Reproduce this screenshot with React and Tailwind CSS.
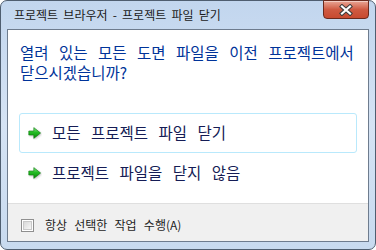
import React from "react";

const KR = { fontFamily: '"Noto Sans CJK KR", "Noto Sans", sans-serif' };

function Arrow() {
  return (
    <svg width="14" height="13" viewBox="0 0 14 13" className="shrink-0">
      <defs>
        <linearGradient id="ag" x1="0" y1="0" x2="0" y2="1">
          <stop offset="0" stopColor="#86e886" />
          <stop offset="0.45" stopColor="#22bb22" />
          <stop offset="1" stopColor="#0a8a0a" />
        </linearGradient>
        <filter id="sh" x="-30%" y="-30%" width="160%" height="160%">
          <feGaussianBlur stdDeviation="0.9" />
        </filter>
      </defs>
      <path d="M1.5 5 H6.5 V1.5 L13.5 7 L6.5 12.5 V9 H1.5 Z" fill="#000" opacity="0.3" filter="url(#sh)" />
      <path d="M0.8 4 H5.8 V0.6 L12.6 6 L5.8 11.4 V8 H0.8 Z" fill="url(#ag)" stroke="#0c7a0c" strokeWidth="0.6" strokeLinejoin="round" />
    </svg>
  );
}

function CloseButton() {
  return (
    <div className="absolute top-[-1px] right-[6px] w-[46px] h-[19px] rounded-b-[4px] border border-[#6a2a1e] bg-gradient-to-b from-[#e8a696] via-[#cf5a42] to-[#c84a30] flex items-center justify-center shadow-[inset_0_1px_0_rgba(255,255,255,0.45)]">
      <svg width="16" height="12" viewBox="0 0 16 12">
        <path d="M4 2.5 L12 9.5 M12 2.5 L4 9.5" stroke="#3b3b3b" strokeWidth="4.2" strokeLinecap="square" />
        <path d="M4 2.5 L12 9.5 M12 2.5 L4 9.5" stroke="#ffffff" strokeWidth="2.2" strokeLinecap="square" />
      </svg>
    </div>
  );
}

export default function App() {
  return (
    <div className="w-[376px] h-[250px] bg-white">
      <div
        className="relative w-[376px] h-[250px] rounded-[7px] border border-[#4f5e70] bg-gradient-to-b from-[#c2d6ee] via-[#d5e3f4] to-[#c8daef] flex flex-col px-[6px] pb-[7px]"
        style={KR}
      >
        <div className="h-[28px] shrink-0 flex items-center pl-[7px] text-[12px] text-[#1a1a1a] leading-none pb-[1px] [word-spacing:2.5px]">
          프로젝트 브라우저 - 프로젝트 파일 닫기
        </div>
        <CloseButton />
        <div className="flex-1 border border-[#6e7c8e] bg-white flex flex-col">
          <div className="flex-1 flex flex-col">
            <div className="pl-[12px] pt-[12px] text-[15.5px] leading-[20px] text-[#003399] [word-spacing:7px] whitespace-nowrap">
              <div>열려 있는 모든 도면 파일을 이전 프로젝트에서</div>
              <div>닫으시겠습니까?</div>
            </div>
            <div className="mt-[31px] mx-[11px] flex flex-col">
              <div className="h-[40px] border border-[#b9e9fc] rounded-[3px] flex items-center pl-[8px] gap-[10px] text-[15.5px] text-[#151c55] [word-spacing:7px]">
                <Arrow />
                <span>모든 프로젝트 파일 닫기</span>
              </div>
              <div className="h-[40px] border border-transparent rounded-[3px] flex items-center pl-[8px] gap-[10px] text-[15.5px] text-[#151c55] [word-spacing:7px]">
                <Arrow />
                <span>프로젝트 파일을 닫지 않음</span>
              </div>
            </div>
          </div>
          <div className="h-[38px] shrink-0 border-t border-[#dfdfdf] bg-[#f0f0f0] flex items-center pl-[13px] pt-[5px] gap-[11px]">
            <div className="w-[13px] h-[13px] border border-[#8f8f8f] bg-white p-[1px]">
              <div className="w-full h-full bg-gradient-to-br from-[#d9d9d9] to-[#f7f7f7] border border-[#c9c9c9]" />
            </div>
            <span className="text-[12px] text-[#1e1e1e] leading-none [word-spacing:4.5px]">항상 선택한 작업 수행(A)</span>
          </div>
        </div>
      </div>
    </div>
  );
}
